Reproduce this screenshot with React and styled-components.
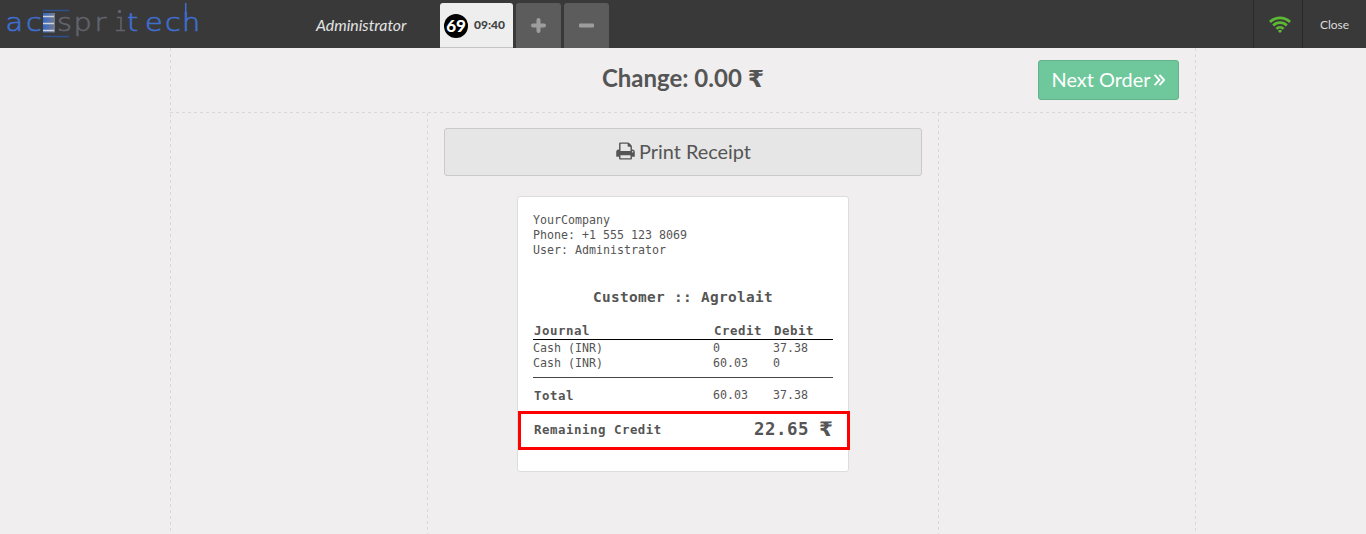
import React from "react";
import styled, { createGlobalStyle, css } from "styled-components";

const GlobalStyle = createGlobalStyle`
  html, body, #root { height: 100%; }
  body {
    margin: 0;
    overflow: hidden;
    background: #f0eeee;
    color: #555;
    font-family: Lato, "Liberation Sans", sans-serif;
  }
  *, *::before, *::after { box-sizing: border-box; }
`;

const Page = styled.div`
  display: flex;
  flex-direction: column;
  height: 100%;
`;

const TopBar = styled.header`
  display: flex;
  flex: none;
  height: 48px;
  background: #393939;
  color: #e4e4e4;
`;

const Branding = styled.div`
  display: flex;
  justify-content: space-between;
  width: 440px;
`;

const Logo = styled.svg`
  display: block;
  width: 210px;
  height: 48px;
`;

const UserName = styled.span`
  width: 124px;
  font-size: 15.85px;
  font-style: italic;
  line-height: 50px;
`;

const Orders = styled.nav`
  display: flex;
  flex: 1;
  gap: 3px;
  padding-top: 3px;
`;

const orderTab = css`
  display: flex;
  align-items: center;
  height: 45px;
  border: 0;
  border-radius: 3px 3px 0 0;
`;

const OrderTab = styled.button`
  ${orderTab}
  gap: 6px;
  width: 73px;
  padding: 0 0 2px 4px;
  background: #eee;
  border-bottom: 1px solid #c4c4c4;
  color: #444;
  font: 900 12px Lato, sans-serif;
`;

const OrderNumber = styled.span`
  width: 24px;
  height: 24px;
  margin-top: 3px;
  border-radius: 50%;
  background: #000;
  color: #fff;
  font-size: 17px;
  line-height: 24px;
  text-align: center;
`;

const SquareTab = styled.button`
  ${orderTab}
  justify-content: center;
  width: 45px;
  padding: 0;
  background: #5c5c5c;
  color: #9d9d9d;
`;

const StatusItem = styled.div`
  display: flex;
  align-items: center;
  justify-content: center;
  width: ${(p) => p.$width}px;
  border-left: 1px solid #292929;
  font-size: 12px;
  color: #ddd;

  svg { margin-left: 4px; }
`;

const Screen = styled.main`
  display: flex;
  flex: 1;
  flex-direction: column;
  width: 1026px;
  margin: 0 auto;
`;

const dash = (angle) =>
  `repeating-linear-gradient(${angle}, #d8d8d8 0 3px, transparent 3px 6px)`;

const Framed = styled(Screen)`
  background:
    ${dash("180deg")} left top / 1px 100% no-repeat,
    ${dash("180deg")} right top / 1px 100% no-repeat;
`;

const TitleBar = styled.div`
  display: grid;
  grid-template-columns: 1fr auto 1fr;
  height: 65px;
  background: ${dash("90deg")} left bottom / 100% 1px no-repeat;
`;

const Title = styled.h1`
  grid-column: 2;
  margin: 0;
  font-size: 24px;
  line-height: 59px;
`;

const Rupee = styled.span`
  font-family: "DejaVu Sans", sans-serif;
  font-size: ${(p) => p.$size}px;
  line-height: 1;
`;

const NextButton = styled.button`
  display: flex;
  align-items: center;
  justify-content: center;
  justify-self: end;
  gap: 4px;
  width: 141px;
  height: 40px;
  margin: 12px 17px 0 0;
  padding: 0 0 2px;
  border: 1px solid #5fb289;
  border-radius: 3px;
  background: #6ec89b;
  color: #fff;
  font: 19.9px Lato, sans-serif;

  svg { margin-top: 2px; }
`;

const Columns = styled.div`
  display: grid;
  grid-template-columns: 257px 512px 1fr;
  flex: 1;
`;

const Center = styled.section`
  grid-column: 2;
  display: flex;
  flex-direction: column;
  align-items: center;
  padding: 15px 17px 0;
  background:
    ${dash("180deg")} left top / 1px 100% no-repeat,
    ${dash("180deg")} right top / 1px 100% no-repeat;
`;

const PrintButton = styled.button`
  display: flex;
  align-items: center;
  justify-content: center;
  gap: 4px;
  width: 100%;
  height: 48px;
  padding: 0 0 2px 1px;
  border: 1px solid #cacaca;
  border-radius: 3px;
  background: #e6e6e6;
  color: #555;
  font: 19.9px Lato, sans-serif;
`;

const Ticket = styled.article`
  position: relative;
  width: 332px;
  height: 276px;
  margin-top: 20px;
  padding: 16px 15px 0;
  border: 1px solid #dcdcdc;
  border-radius: 3px;
  background: #fff;
  font: 11.63px/15px "DejaVu Sans Mono", monospace;
`;

const Customer = styled.h2`
  margin: 30px 0 0;
  font-size: 14.4px;
  letter-spacing: 0.33px;
  line-height: 18px;
  text-align: center;
`;

const Row = styled.div`
  display: grid;
  grid-template-columns: 180px 60px 60px;
  line-height: 15px;
`;

const Strong = styled.b`
  padding-left: 1px;
  font-size: 12.4px;
  letter-spacing: 0.53px;
`;

const HeadRow = styled(Row)`
  margin-top: 17px;
  height: 17px;
  border-bottom: 1px solid #000;
`;

const Entries = styled.div`
  padding: 1px 0 6px;
  border-bottom: 1px solid #444;
`;

const TotalRow = styled(Row)`
  margin-top: 10px;
`;

const CreditRow = styled.div`
  display: flex;
  justify-content: space-between;
  align-items: center;
  margin-top: 14px;
  height: 24px;
`;

const Amount = styled.b`
  display: flex;
  align-items: center;
  gap: 10px;
  font-size: 17.4px;
  letter-spacing: 0.53px;

  ${Rupee} { letter-spacing: 0; }
`;

const Highlight = styled.div`
  position: absolute;
  top: 214px;
  left: 0;
  width: 332px;
  height: 39px;
  border: 3px solid #f00;
`;

const letters = [
  ["a", 5.5, "#3f6fd0"], ["c", 26, "#3f6fd0"],
  ["s", 57, "#63636f"], ["p", 73.5, "#63636f"], ["r", 94.5, "#63636f"],
  ["t", 127, "#3f6fd0"], ["e", 145, "#3f6fd0"], ["c", 165, "#3f6fd0"], ["h", 182, "#3f6fd0"],
];

function BrandLogo() {
  return (
    <Logo viewBox="0 0 210 48">
      <defs>
        <linearGradient id="block" x1="0" x2="1">
          <stop offset="0" stopColor="#3568cb" />
          <stop offset="1" stopColor="#777b89" />
        </linearGradient>
      </defs>
      <g fontFamily="DejaVu Sans" fontWeight="200" fontSize="25">
        {letters.map(([letter, x, fill]) => (
          <text key={x} transform={`translate(${x} 30.5) scale(1.15 1)`} fill={fill} stroke={fill} strokeWidth="0.6">{letter}</text>
        ))}
      </g>
      <path d="M117 17.500h4v13M116 30.500h9" fill="none" stroke="#63636f" strokeWidth="1.500" />
      <circle cx="119.500" cy="11.500" r="1.700" fill="#63636f" />
      <path d="M185.700 3v12" stroke="#3f6fd0" strokeWidth="1.500" />
      <path d="M43 10.500h26M43 36.500h26" stroke="#2f4f8f" strokeWidth="1.500" />
      <path d="M43 13h12v19.500h-12z" fill="url(#block)" />
      <path d="M43 16.500h11M43 23.500h11M43 30.500h11" stroke="#d0d3dc" strokeWidth="1.300" />
    </Logo>
  );
}

function PrinterIcon() {
  return (
    <svg width="19" height="20" viewBox="0 0 1664 1792" fill="currentColor">
      <path d="M384 1536h896v-256h-896v256zM384 896h896v-384h-160q-40 0-68-28t-28-68v-160h-640v640zM1536 960q0-26-19-45t-45-19-45 19-19 45 19 45 45 19 45-19 19-45zM1664 960v416q0 13-9.500 22.500t-22.500 9.500h-224v160q0 40-28 68t-68 28h-960q-40 0-68-28t-28-68v-160h-224q-13 0-22.500-9.500t-9.500-22.500v-416q0-79 56.500-135.500t135.500-56.500h64v-544q0-40 28-68t68-28h672q40 0 88 20t76 48l152 152q28 28 48 76t20 88v256h64q79 0 135.500 56.500t56.500 135.500z" />
    </svg>
  );
}

function NextIcon() {
  return (
    <svg width="11" height="12" viewBox="0 0 11 12" fill="none" stroke="currentColor" strokeWidth="1.900">
      <path d="M0.600 0.800 5.400 6l-4.800 5.200M5.400 0.800 10.200 6l-4.800 5.200" />
    </svg>
  );
}

function WifiIcon() {
  return (
    <svg width="22" height="17" viewBox="0 0 22 17" fill="none" stroke="#5db835" strokeWidth="2.700">
      <path d="M0.900 6a14.300 14.300 0 0 1 20.200 0M4.200 9.500a9.600 9.600 0 0 1 13.600 0M7.400 12.900a5.100 5.100 0 0 1 7.200 0" />
      <path d="M11 17 8.900 14.900a3 3 0 0 1 4.200 0z" fill="#5db835" stroke="none" />
    </svg>
  );
}

const entries = [
  ["Cash (INR)", "0", "37.38"],
  ["Cash (INR)", "60.03", "0"],
];

export default function App() {
  return (
    <Page>
      <GlobalStyle />
      <TopBar>
        <Branding>
          <BrandLogo />
          <UserName>Administrator</UserName>
        </Branding>
        <Orders>
          <OrderTab><OrderNumber>69</OrderNumber>09:40</OrderTab>
          <SquareTab>
            <svg width="15" height="15" viewBox="0 0 15 15"><path d="M7.500 2v11M2 7.500h11" stroke="currentColor" strokeWidth="4" strokeLinecap="round" /></svg>
          </SquareTab>
          <SquareTab>
            <svg width="15" height="15" viewBox="0 0 15 15"><rect y="5.500" width="15" height="4" rx="1" fill="currentColor" /></svg>
          </SquareTab>
        </Orders>
        <StatusItem $width={49}><WifiIcon /></StatusItem>
        <StatusItem $width={64}>Close</StatusItem>
      </TopBar>
      <Framed>
        <TitleBar>
          <Title>Change: 0.00 <Rupee $size={23.5}>₹</Rupee></Title>
          <NextButton>Next Order<NextIcon /></NextButton>
        </TitleBar>
        <Columns>
          <Center>
            <PrintButton><PrinterIcon />Print Receipt</PrintButton>
            <Ticket>
              <div>YourCompany</div>
              <div>Phone: +1 555 123 8069</div>
              <div>User: Administrator</div>
              <Customer>Customer :: Agrolait</Customer>
              <HeadRow><Strong>Journal</Strong><Strong>Credit</Strong><Strong>Debit</Strong></HeadRow>
              <Entries>
                {entries.map(([journal, credit, debit]) => (
                  <Row key={credit}><span>{journal}</span><span>{credit}</span><span>{debit}</span></Row>
                ))}
              </Entries>
              <TotalRow><Strong>Total</Strong><span>60.03</span><span>37.38</span></TotalRow>
              <CreditRow>
                <Strong>Remaining Credit</Strong>
                <Amount>22.65 <Rupee $size={20}>₹</Rupee></Amount>
              </CreditRow>
              <Highlight />
            </Ticket>
          </Center>
        </Columns>
      </Framed>
    </Page>
  );
}
